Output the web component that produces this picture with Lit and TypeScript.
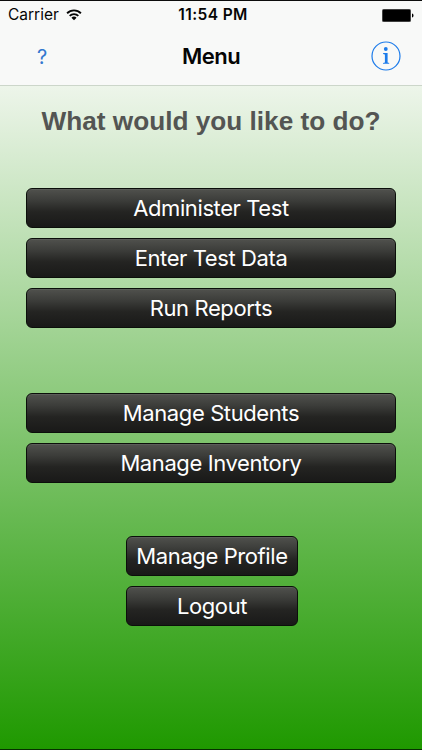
import { LitElement, html, css } from "lit";
import { customElement, property } from "lit/decorators.js";

@customElement("menu-button")
export class MenuButton extends LitElement {
  @property() label = "";

  static styles = css`
    :host { display: block; }
    .button {
      display: block;
      box-sizing: border-box;
      width: 100%;
      height: 40px;
      margin: 0;
      padding: 1px 0 0;
      border: 1px solid #0b0f0a;
      border-radius: 6px;
      background: linear-gradient(#50514d 0%, #3c3d3a 30%, #242422 60%, #191918 100%);
      box-shadow: inset 0 1px 0 rgba(255, 255, 255, 0.08);
      color: #fff;
      font: 400 22px/37px Inter, "Liberation Sans", sans-serif;
      letter-spacing: -0.4px;
      text-align: center;
      white-space: nowrap;
    }
  `;

  render() {
    return html`<button class="button">${this.label}</button>`;
  }
}

@customElement("app-root")
export class AppRoot extends LitElement {
  static styles = css`
    :host {
      display: flex;
      flex-direction: column;
      box-sizing: border-box;
      width: 422px;
      height: 750px;
      overflow: hidden;
      border-top: 1px solid #0c0c0c;
      border-bottom: 1px solid #063000;
      font-family: Inter, "Liberation Sans", sans-serif;
      color: #050505;
    }
    .top {
      flex: none;
      box-sizing: border-box;
      height: 85px;
      background: #f8f9f8;
      border-bottom: 1px solid #ccd6ca;
    }
    .status {
      display: grid;
      grid-template-columns: 1fr auto 1fr;
      align-items: center;
      height: 28px;
      padding: 0 8px;
      font-size: 15.5px;
      line-height: 28px;
    }
    .carrier { display: flex; align-items: center; gap: 7px; }
    .time { padding-left: 4px; font-weight: 600; font-size: 15.5px; letter-spacing: 0.4px; }
    .battery { justify-self: end; }
    svg { display: block; }
    .nav {
      display: grid;
      grid-template-columns: 1fr auto 1fr;
      align-items: center;
      height: 54px;
    }
    .help { padding: 1px 0 0 37px; color: #3478cf; font-size: 20px; }
    .title { font-weight: 600; font-size: 22px; letter-spacing: -0.5px; }
    .info { justify-self: end; margin-right: 21px; }
    .body {
      flex: 1;
      display: flex;
      flex-direction: column;
      align-items: center;
      background: linear-gradient(#edf5ea, #1f9900);
    }
    .question {
      margin: 19px 0 0;
      height: 32px;
      font: 700 26.2px/32px "Liberation Sans", sans-serif;
      color: #535553;
      white-space: nowrap;
    }
    .group { display: grid; gap: 10px; width: 370px; }
    .tests { margin-top: 51px; }
    .manage { margin-top: 65px; }
    .account { margin: 53px 0 0 2px; width: 172px; }
  `;

  render() {
    return html`
      <header class="top">
        <div class="status">
          <span class="carrier">Carrier
            <svg width="16" height="12" viewBox="0 0 17 13" fill="none" stroke="#050505" stroke-width="2">
              <path d="M1 4.6a10.6 10.6 0 0 1 15 0M3.8 7.5a6.6 6.6 0 0 1 9.4 0" />
              <path d="M5.7 9.5a4 4 0 0 1 5.6 0L8.5 12.3z" fill="#050505" stroke="none" />
            </svg>
          </span>
          <span class="time">11:54 PM</span>
          <svg class="battery" width="32" height="13" viewBox="0 0 32 13">
            <rect x="0" y="0" width="29" height="13" rx="1.5" fill="#555" />
            <rect x="0.8" y="0.8" width="27.4" height="11.4" rx="1" />
            <path d="M30 4.5c2 .6 2 3.4 0 4z" />
          </svg>
        </div>
        <nav class="nav">
          <span class="help">?</span>
          <span class="title">Menu</span>
          <svg class="info" width="30" height="30" viewBox="0 0 30 30" fill="#1c7bea">
            <circle cx="15" cy="15" r="14" fill="none" stroke="#1c7bea" stroke-width="1.2" />
            <circle cx="14.8" cy="8" r="1.9" />
            <path d="M12.1 12h4.5v9.4l1.6.5v.9h-6.2v-.9l1.9-.5v-8l-1.8-.4z" />
          </svg>
        </nav>
      </header>
      <main class="body">
        <h1 class="question">What would you like to do?</h1>
        <div class="group tests">
          <menu-button label="Administer Test"></menu-button>
          <menu-button label="Enter Test Data"></menu-button>
          <menu-button label="Run Reports"></menu-button>
        </div>
        <div class="group manage">
          <menu-button label="Manage Students"></menu-button>
          <menu-button label="Manage Inventory"></menu-button>
        </div>
        <div class="group account">
          <menu-button label="Manage Profile"></menu-button>
          <menu-button label="Logout"></menu-button>
        </div>
      </main>
    `;
  }
}
